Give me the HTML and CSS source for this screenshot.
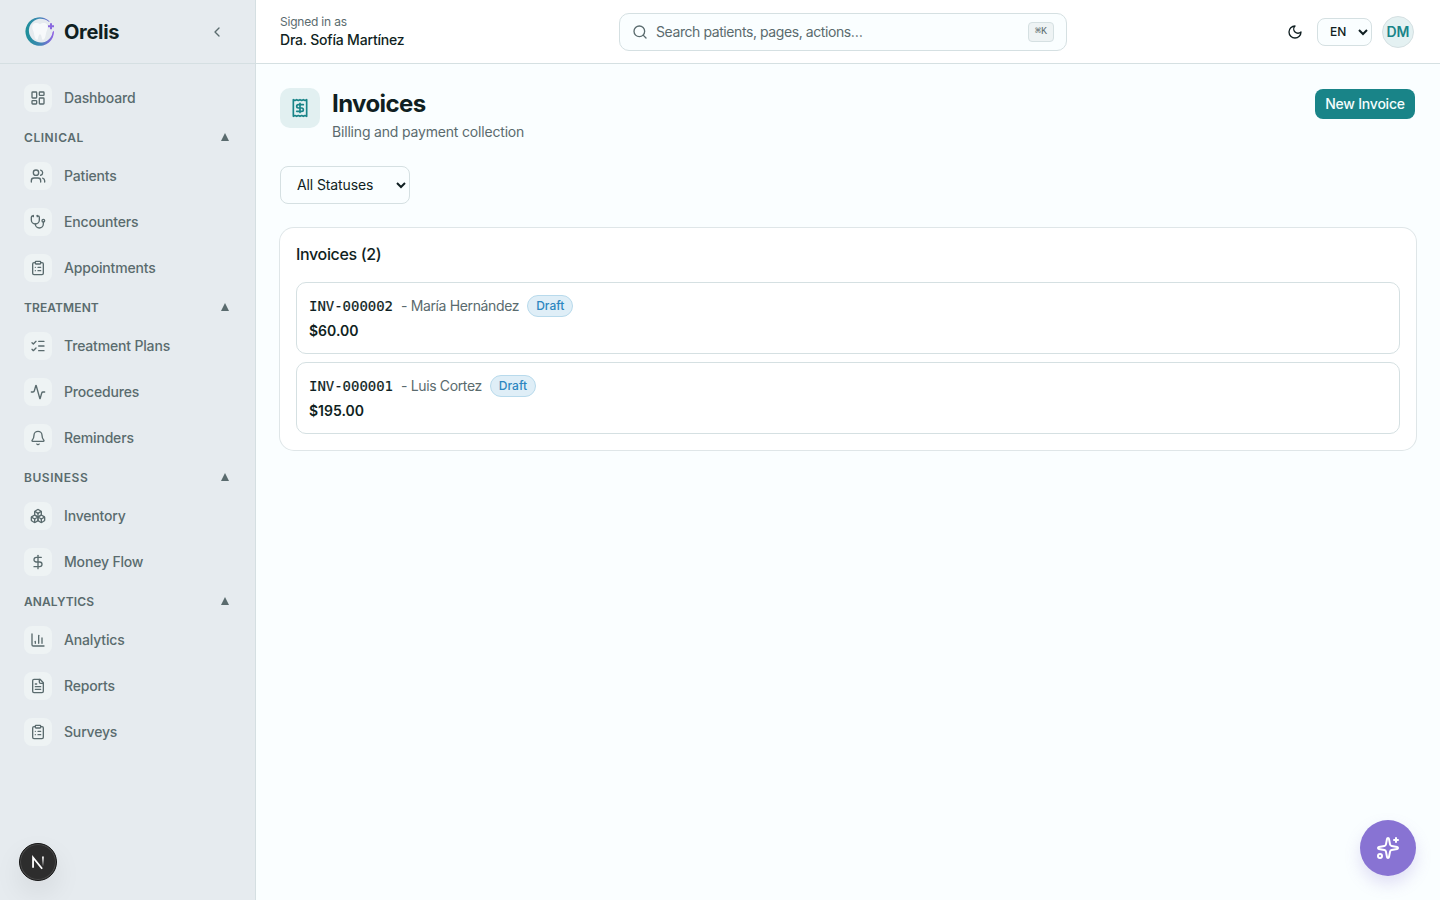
FILE: index.html
```
<!DOCTYPE html>
<html lang="en">
<head>
  <meta charset="UTF-8" />
  <meta name="viewport" content="width=device-width, initial-scale=1.0"/>
  <title>Invoices - Orelis</title>
  <link rel="stylesheet" href="styles.css">
</head>
<body>

  <aside class="sidebar">
    <div class="brand">
      <svg class="logo" viewBox="0 0 32 32">
        <defs>
          <linearGradient id="ring" x1="0" y1="0" x2="1" y2="0">
            <stop offset="0" stop-color="#1b8f98"/>
            <stop offset="0.5" stop-color="#3f88b4"/>
            <stop offset="1" stop-color="#9461e6"/>
          </linearGradient>
        </defs>
        <path fill="url(#ring)" d="M25.800 5.400A14.300 14.300 0 1 0 30 14.700L28.600 16A11.900 11.900 0 1 1 24.800 5.800Z"/>
        <path fill="#f7f9fb" d="M16 8.200c-2-1.300-5.300-2-7 .3-1.600 2.300-.4 5 .5 7.100.8 2.300 1 7.500 3.200 8.200 2 .4 1.300-5.600 3.300-5.600s1.300 6 3.300 5.600c2.200-.7 2.400-5.900 3.200-8.200.9-2.100 2.100-4.800.5-7.100-1.700-2.300-5-1.600-7-.3Z"/>
        <path stroke="#8a69df" stroke-width="2" d="M27 7.300v6M24 10.300h6"/>
      </svg>
      <span class="brand-name">Orelis</span>
      <svg class="icon collapse" viewBox="0 0 24 24"><path d="m15 18-6-6 6-6"/></svg>
    </div>

    <nav class="nav">
      <a class="nav-item">
        <span class="nav-icon"><svg class="icon" viewBox="0 0 24 24"><rect width="7" height="9" x="3" y="3" rx="1"/><rect width="7" height="5" x="14" y="3" rx="1"/><rect width="7" height="9" x="14" y="12" rx="1"/><rect width="7" height="5" x="3" y="16" rx="1"/></svg></span>
        <span>Dashboard</span>
      </a>

      <div class="nav-title"><span>CLINICAL</span><span class="caret"></span></div>
      <a class="nav-item">
        <span class="nav-icon"><svg class="icon" viewBox="0 0 24 24"><path d="M16 21v-2a4 4 0 0 0-4-4H6a4 4 0 0 0-4 4v2"/><circle cx="9" cy="7" r="4"/><path d="M22 21v-2a4 4 0 0 0-3-3.870"/><path d="M16 3.130a4 4 0 0 1 0 7.750"/></svg></span>
        <span>Patients</span>
      </a>
      <a class="nav-item">
        <span class="nav-icon"><svg class="icon" viewBox="0 0 24 24"><path d="M11 2v2"/><path d="M5 2v2"/><path d="M5 3H4a2 2 0 0 0-2 2v4a6 6 0 0 0 12 0V5a2 2 0 0 0-2-2h-1"/><path d="M8 15a6 6 0 0 0 12 0v-3"/><circle cx="20" cy="10" r="2"/></svg></span>
        <span>Encounters</span>
      </a>
      <a class="nav-item">
        <span class="nav-icon"><svg class="icon" viewBox="0 0 24 24"><rect width="8" height="4" x="8" y="2" rx="1"/><path d="M16 4h2a2 2 0 0 1 2 2v14a2 2 0 0 1-2 2H6a2 2 0 0 1-2-2V6a2 2 0 0 1 2-2h2"/><path d="M12 11h4"/><path d="M12 16h4"/><path d="M8 11h.01"/><path d="M8 16h.01"/></svg></span>
        <span>Appointments</span>
      </a>

      <div class="nav-title tight"><span>TREATMENT</span><span class="caret"></span></div>
      <a class="nav-item">
        <span class="nav-icon"><svg class="icon" viewBox="0 0 24 24"><path d="M13 5h8"/><path d="M13 12h8"/><path d="M13 19h8"/><path d="m3 17 2 2 4-4"/><path d="m3 7 2 2 4-4"/></svg></span>
        <span>Treatment Plans</span>
      </a>
      <a class="nav-item">
        <span class="nav-icon"><svg class="icon" viewBox="0 0 24 24"><path d="M22 12h-2.480a2 2 0 0 0-1.930 1.460l-2.350 8.360a.25.25 0 0 1-.48 0L9.240 2.180a.25.25 0 0 0-.48 0l-2.350 8.360A2 2 0 0 1 4.490 12H2"/></svg></span>
        <span>Procedures</span>
      </a>
      <a class="nav-item">
        <span class="nav-icon"><svg class="icon" viewBox="0 0 24 24"><path d="M10.268 21a2 2 0 0 0 3.464 0"/><path d="M3.262 15.326A1 1 0 0 0 4 17h16a1 1 0 0 0 .740-1.673C19.410 13.956 18 12.499 18 8A6 6 0 0 0 6 8c0 4.499-1.411 5.956-2.738 7.326"/></svg></span>
        <span>Reminders</span>
      </a>

      <div class="nav-title"><span>BUSINESS</span><span class="caret"></span></div>
      <a class="nav-item">
        <span class="nav-icon"><svg class="icon" viewBox="0 0 24 24"><path d="M2.970 12.920A2 2 0 0 0 2 14.630v3.240a2 2 0 0 0 .970 1.710l3 1.800a2 2 0 0 0 2.060 0L12 19v-5.500l-5-3-4.030 2.420Z"/><path d="m7 16.500-4.740-2.850"/><path d="m7 16.500 5-3"/><path d="M7 16.500v5.170"/><path d="M12 13.500V19l3.970 2.380a2 2 0 0 0 2.060 0l3-1.800a2 2 0 0 0 .970-1.710v-3.240a2 2 0 0 0-.970-1.710L17 10.500l-5 3Z"/><path d="m17 16.500-5-3"/><path d="m17 16.500 4.740-2.850"/><path d="M17 16.500v5.170"/><path d="M7.970 4.420A2 2 0 0 0 7 6.130v4.370l5 3 5-3V6.130a2 2 0 0 0-.970-1.710l-3-1.800a2 2 0 0 0-2.060 0l-3 1.800Z"/><path d="M12 8 7.260 5.150"/><path d="m12 8 4.740-2.850"/><path d="M12 13.500V8"/></svg></span>
        <span>Inventory</span>
      </a>
      <a class="nav-item">
        <span class="nav-icon"><svg class="icon" viewBox="0 0 24 24"><path d="M12 2v20"/><path d="M17 5H9.500a3.500 3.500 0 0 0 0 7h5a3.500 3.500 0 0 1 0 7H6"/></svg></span>
        <span>Money Flow</span>
      </a>

      <div class="nav-title tight"><span>ANALYTICS</span><span class="caret"></span></div>
      <a class="nav-item">
        <span class="nav-icon"><svg class="icon" viewBox="0 0 24 24"><path d="M3 3v16a2 2 0 0 0 2 2h16"/><path d="M18 17V9"/><path d="M13 17V5"/><path d="M8 17v-3"/></svg></span>
        <span>Analytics</span>
      </a>
      <a class="nav-item">
        <span class="nav-icon"><svg class="icon" viewBox="0 0 24 24"><path d="M15 2H6a2 2 0 0 0-2 2v16a2 2 0 0 0 2 2h12a2 2 0 0 0 2-2V7Z"/><path d="M14 2v4a2 2 0 0 0 2 2h4"/><path d="M10 9H8"/><path d="M16 13H8"/><path d="M16 17H8"/></svg></span>
        <span>Reports</span>
      </a>
      <a class="nav-item">
        <span class="nav-icon"><svg class="icon" viewBox="0 0 24 24"><rect width="8" height="4" x="8" y="2" rx="1"/><path d="M16 4h2a2 2 0 0 1 2 2v14a2 2 0 0 1-2 2H6a2 2 0 0 1-2-2V6a2 2 0 0 1 2-2h2"/><path d="M12 11h4"/><path d="M12 16h4"/><path d="M8 11h.01"/><path d="M8 16h.01"/></svg></span>
        <span>Surveys</span>
      </a>
    </nav>
  </aside>

  <div class="page">
    <header class="topbar">
      <div class="user">
        <span class="user-label">Signed in as</span>
        <span class="user-name">Dra. Sofía Martínez</span>
      </div>
      <div class="search">
        <svg class="icon" viewBox="0 0 24 24"><circle cx="11" cy="11" r="8"/><path d="m21 21-4.300-4.300"/></svg>
        <span class="search-text">Search patients, pages, actions…</span>
        <kbd>⌘K</kbd>
      </div>
      <div class="actions">
        <svg class="icon moon" viewBox="0 0 24 24"><path d="M12 3a6 6 0 0 0 9 9 9 9 0 1 1-9-9Z"/></svg>
        <select class="lang">
          <option>EN</option>
          <option>ES</option>
        </select>
        <span class="avatar">DM</span>
      </div>
    </header>

    <main class="content">
      <div class="page-head">
        <span class="page-icon"><svg class="icon" viewBox="0 0 24 24"><path d="M4 2v20l2-1 2 1 2-1 2 1 2-1 2 1 2-1 2 1V2l-2 1-2-1-2 1-2-1-2 1-2-1-2 1Z"/><path d="M16 8h-6a2 2 0 1 0 0 4h4a2 2 0 1 1 0 4H8"/><path d="M12 17.500v-11"/></svg></span>
        <div class="page-title">
          <h1>Invoices</h1>
          <p>Billing and payment collection</p>
        </div>
        <button class="btn">New Invoice</button>
      </div>

      <select class="status">
        <option>All Statuses</option>
        <option>Draft</option>
        <option>Paid</option>
      </select>

      <section class="card">
        <h2>Invoices (2)</h2>
        <div class="invoice">
          <div class="invoice-line">
            <span class="invoice-no">INV-000002</span>
            <span class="patient">- María Hernández</span>
            <span class="badge">Draft</span>
          </div>
          <div class="amount">$60.00</div>
        </div>
        <div class="invoice">
          <div class="invoice-line">
            <span class="invoice-no">INV-000001</span>
            <span class="patient">- Luis Cortez</span>
            <span class="badge">Draft</span>
          </div>
          <div class="amount">$195.00</div>
        </div>
      </section>
    </main>
  </div>

  <button class="fab">
    <svg class="icon" viewBox="0 0 24 24"><path d="M11.017 2.814a1 1 0 0 1 1.966 0l1.051 5.558a2 2 0 0 0 1.594 1.594l5.558 1.051a1 1 0 0 1 0 1.966l-5.558 1.051a2 2 0 0 0-1.594 1.594l-1.051 5.558a1 1 0 0 1-1.966 0l-1.051-5.558a2 2 0 0 0-1.594-1.594l-5.558-1.051a1 1 0 0 1 0-1.966l5.558-1.051a2 2 0 0 0 1.594-1.594z"/><path d="M20 2v4"/><path d="M22 4h-4"/><circle cx="4" cy="20" r="2"/></svg>
  </button>

  <div class="dev-badge">
    <svg viewBox="0 0 40 40">
      <defs>
        <linearGradient id="fade" gradientUnits="userSpaceOnUse" x1="0" y1="14" x2="0" y2="25">
          <stop offset="0" stop-color="#fff"/>
          <stop offset="1" stop-color="#fff" stop-opacity="0"/>
        </linearGradient>
      </defs>
      <path stroke="#fff" stroke-width="2" fill="none" d="M14.500 26.500V15L24.600 27.500"/>
      <path stroke="url(#fade)" stroke-width="2" fill="none" d="M25.500 14v11"/>
    </svg>
  </div>

</body>
</html>
```
FILE: styles.css
```
* {
  box-sizing: border-box;
}

body {
  margin: 0;
  display: flex;
  height: 100vh;
  overflow: hidden;
  font-family: Inter, "Liberation Sans", sans-serif;
  font-size: 14px;
  line-height: 20px;
  color: #101f22;
  background: #fafeff;
}

h1, h2, p {
  margin: 0;
}

.icon {
  width: 16px;
  height: 16px;
  flex-shrink: 0;
  fill: none;
  stroke: currentColor;
  stroke-width: 2;
  stroke-linecap: round;
  stroke-linejoin: round;
}

/* Sidebar */
.sidebar {
  width: 256px;
  flex-shrink: 0;
  background: #e6ebef;
  border-right: 1px solid #d5dfe2;
  color: #5a6b6e;
}

.brand {
  display: flex;
  align-items: center;
  height: 64px;
  padding: 0 30px 0 24px;
  border-bottom: 1px solid #d5dfe2;
}

.logo {
  width: 32px;
  height: 32px;
  fill: none;
}

.brand-name {
  margin-left: 8px;
  font-size: 20px;
  font-weight: 700;
  letter-spacing: -0.3px;
  color: #101f22;
}

.collapse {
  margin-left: auto;
}

.nav {
  display: flex;
  flex-direction: column;
  gap: 2px;
  padding: 12px 16px;
}

.nav-item {
  display: flex;
  align-items: center;
  gap: 12px;
  height: 44px;
  padding: 0 8px;
  font-weight: 500;
  letter-spacing: -0.17px;
}

.nav-icon {
  display: flex;
  align-items: center;
  justify-content: center;
  width: 28px;
  height: 28px;
  border-radius: 8px;
  background: #eef3f4;
}

.nav-title {
  display: flex;
  align-items: center;
  justify-content: space-between;
  height: 30px;
  padding: 2px 10px 0 8px;
  font-size: 12px;
  line-height: 16px;
  font-weight: 600;
  letter-spacing: 0.55px;
}

.nav-title.tight {
  letter-spacing: 0.1px;
}

.caret {
  margin-bottom: 2px;
  border: 4px solid transparent;
  border-top: 0;
  border-bottom: 8px solid #5a6b6e;
}

/* Top bar */
.page {
  flex: 1;
  min-width: 0;
}

.topbar {
  display: grid;
  grid-template-columns: 339px 448px 1fr;
  align-items: center;
  height: 64px;
  padding: 0 26px 0 24px;
  background: #fff;
  border-bottom: 1px solid #d5e0e2;
}

.user {
  display: flex;
  flex-direction: column;
}

.user-label {
  font-size: 12px;
  line-height: 16px;
  letter-spacing: -0.2px;
  color: #5a6b6e;
}

.user-name {
  font-weight: 500;
  letter-spacing: -0.2px;
}

.search {
  display: flex;
  align-items: center;
  gap: 8px;
  height: 38px;
  padding: 0 12px;
  border: 1px solid #d5e0e2;
  border-radius: 10px;
  background: #fafeff;
  color: #5a6b6e;
}

.search-text {
  flex: 1;
  letter-spacing: -0.42px;
}

kbd {
  width: 26px;
  height: 20px;
  border: 1px solid #d5e0e2;
  border-radius: 4px;
  background: #eef3f4;
  font-family: "Liberation Mono", monospace;
  font-size: 10px;
  line-height: 17px;
  font-weight: 500;
  text-align: center;
}

.actions {
  display: flex;
  align-items: center;
  justify-content: flex-end;
}

.moon {
  margin-right: 14px;
}

select {
  font-family: inherit;
  color: #101f22;
  background: #fafeff;
  border: 1px solid #d5e0e2;
}

.lang {
  width: 55px;
  height: 28px;
  margin-right: 10px;
  padding: 0 0 0 8px;
  border-radius: 8px;
  font-size: 12px;
  font-weight: 500;
}

.avatar {
  width: 32px;
  height: 32px;
  border: 1px solid #d5e0e2;
  border-radius: 50%;
  background: #e4f1f2;
  color: #198488;
  font-weight: 600;
  line-height: 30px;
  text-align: center;
}

/* Content */
.content {
  padding: 24px;
}

.page-head {
  display: flex;
  align-items: flex-start;
  height: 78px;
}

.page-icon {
  display: flex;
  align-items: center;
  justify-content: center;
  width: 40px;
  height: 40px;
  border-radius: 10px;
  background: #e2f0f1;
  color: #198488;
}

.page-icon .icon {
  width: 20px;
  height: 20px;
}

.page-title {
  flex: 1;
  padding-left: 12px;
}

h1 {
  font-size: 24px;
  line-height: 32px;
  font-weight: 700;
  letter-spacing: -0.6px;
}

.page-title p {
  margin-top: 2px;
  letter-spacing: -0.18px;
  color: #5a6b6e;
}

.btn {
  width: 100px;
  height: 30px;
  margin: 1px 1px 0 0;
  padding: 0 0 1px;
  border: 0;
  border-radius: 8px;
  background: #198488;
  color: #f5fdfd;
  font-family: inherit;
  font-size: 14px;
  font-weight: 500;
  letter-spacing: -0.22px;
}

.status {
  display: block;
  width: 130px;
  height: 38px;
  padding: 0 0 1px 12px;
  border-radius: 8px;
  font-size: 14px;
  letter-spacing: -0.12px;
}

.card {
  margin-top: 24px;
  padding: 16px;
  border-radius: 14px;
  background: #fff;
  box-shadow: 0 0 0 1px #dfe6e8;
}

h2 {
  margin-bottom: 18px;
  font-size: 16px;
  line-height: 20px;
  font-weight: 500;
  letter-spacing: -0.35px;
}

.invoice {
  height: 72px;
  padding: 12px;
  border: 1px solid #d5e0e2;
  border-radius: 10px;
}

.invoice + .invoice {
  margin-top: 8px;
}

.invoice-line {
  display: flex;
  align-items: center;
  gap: 8px;
  height: 22px;
}

.invoice-no {
  font-family: "DejaVu Sans Mono", monospace;
  letter-spacing: -0.03px;
  -webkit-text-stroke: 0.2px #101f22;
}

.patient {
  letter-spacing: -0.36px;
  color: #5a6b6e;
}

.badge {
  height: 22px;
  padding: 0 8px;
  border: 1px solid #b8daec;
  border-radius: 11px;
  background: #dfeef7;
  color: #2c86c0;
  font-size: 12px;
  line-height: 20px;
  font-weight: 500;
}

.amount {
  margin-top: 4px;
  font-weight: 600;
}

/* Floating buttons */
.fab {
  position: fixed;
  right: 24px;
  bottom: 24px;
  display: flex;
  align-items: center;
  justify-content: center;
  width: 56px;
  height: 56px;
  padding: 0;
  border: 0;
  border-radius: 50%;
  background: #8873d3;
  color: #fff;
  box-shadow: 0 8px 16px rgba(136, 115, 211, 0.22);
}

.fab .icon {
  width: 24px;
  height: 24px;
}

.dev-badge {
  position: fixed;
  left: 19px;
  bottom: 19px;
  width: 38px;
  height: 38px;
  border: 1px solid #151515;
  border-radius: 50%;
  background: #2d2d2d;
  box-shadow: inset 0 0 0 1px #4a4a4a, 0 12px 28px rgba(0, 0, 0, 0.08);
}

.dev-badge svg {
  display: block;
  width: 36px;
  height: 36px;
}
```
